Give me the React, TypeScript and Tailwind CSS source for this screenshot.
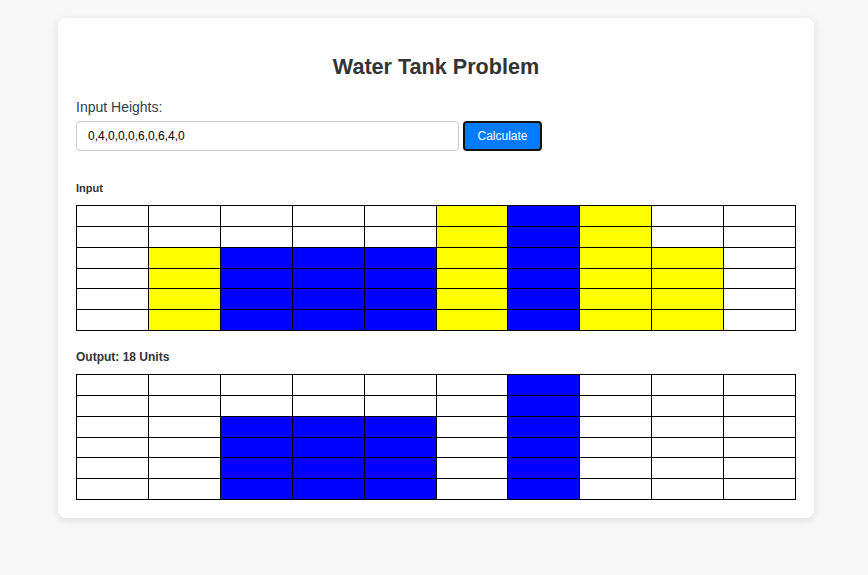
import React, { useState } from "react";

type Cell = "empty" | "block" | "water";

const computeWater = (heights: number[]) => {
  const n = heights.length;
  const leftMax: number[] = new Array(n).fill(0);
  const rightMax: number[] = new Array(n).fill(0);
  for (let i = 0; i < n; i++) {
    leftMax[i] = Math.max(i > 0 ? leftMax[i - 1] : 0, heights[i]);
  }
  for (let i = n - 1; i >= 0; i--) {
    rightMax[i] = Math.max(i < n - 1 ? rightMax[i + 1] : 0, heights[i]);
  }
  return heights.map((h, i) => Math.max(0, Math.min(leftMax[i], rightMax[i]) - h));
};

const cellClass: Record<Cell, string> = {
  empty: "bg-white",
  block: "bg-[#ffff00]",
  water: "bg-[#0000ff]",
};

const Grid: React.FC<{ rows: Cell[][]; cols: number }> = ({ rows, cols }) => (
  <div
    className="grid gap-px bg-black p-px h-[126px] w-full"
    style={{
      gridTemplateColumns: `repeat(${cols}, minmax(0, 1fr))`,
      gridTemplateRows: `repeat(${rows.length}, minmax(0, 1fr))`,
    }}
  >
    {rows.flatMap((row, r) =>
      row.map((cell, c) => <div key={`${r}-${c}`} className={cellClass[cell]} />)
    )}
  </div>
);

export default function App() {
  const [text, setText] = useState("0,4,0,0,0,6,0,6,4,0");
  const [heights, setHeights] = useState<number[]>([0, 4, 0, 0, 0, 6, 0, 6, 4, 0]);

  const handleCalculate = () => {
    const parsed = text
      .split(",")
      .map((v) => parseInt(v.trim()))
      .filter((v) => !isNaN(v) && v >= 0);
    setHeights(parsed);
  };

  const water = computeWater(heights);
  const total = water.reduce((a, b) => a + b, 0);
  const maxH = Math.max(1, ...heights.map((h, i) => h + water[i]));

  // rows from top to bottom
  const inputRows: Cell[][] = [];
  const outputRows: Cell[][] = [];
  for (let level = maxH; level >= 1; level--) {
    inputRows.push(
      heights.map((h, i) => (h >= level ? "block" : h + water[i] >= level ? "water" : "empty"))
    );
    outputRows.push(
      heights.map((h, i) => (h < level && h + water[i] >= level ? "water" : "empty"))
    );
  }

  return (
    <div
      className="min-h-screen bg-[#f8f8f8] pt-[18px]"
      style={{ fontFamily: '"Liberation Sans", Arial, sans-serif' }}
    >
      <div className="ml-[58px] w-[756px] bg-white rounded-lg shadow-[0_2px_8px_rgba(0,0,0,0.12)] px-[18px] pt-[36px] pb-[18px] text-[#333]">
        <h2 className="text-center text-[21.6px] leading-[25px] font-bold text-[#333]">
          Water Tank Problem
        </h2>

        <label className="block mt-[20px] text-[14px] leading-[16px] text-[#2c3e50]">
          Input Heights:
        </label>
        <div className="flex items-center gap-[4px] mt-[6px]">
          <input
            type="text"
            value={text}
            onChange={(e) => setText(e.target.value)}
            className="w-[383px] h-[30px] border border-[#ccc] rounded-[4px] pl-[11px] text-[12px] text-black outline-none"
          />
          <button
            type="button"
            onClick={handleCalculate}
            className="w-[79px] h-[30px] bg-[#007bff] text-white text-[12px] rounded-[4px] border-2 border-[#111]"
          >
            Calculate
          </button>
        </div>

        <div className="mt-[31px] text-[11px] leading-[13px] font-bold text-[#333]">Input</div>
        <div className="mt-[10px]">
          <Grid rows={inputRows} cols={heights.length} />
        </div>

        <div className="mt-[19px] text-[12px] leading-[14px] font-bold text-[#333]">
          Output: {total} Units
        </div>
        <div className="mt-[10px]">
          <Grid rows={outputRows} cols={heights.length} />
        </div>
      </div>
    </div>
  );
}
